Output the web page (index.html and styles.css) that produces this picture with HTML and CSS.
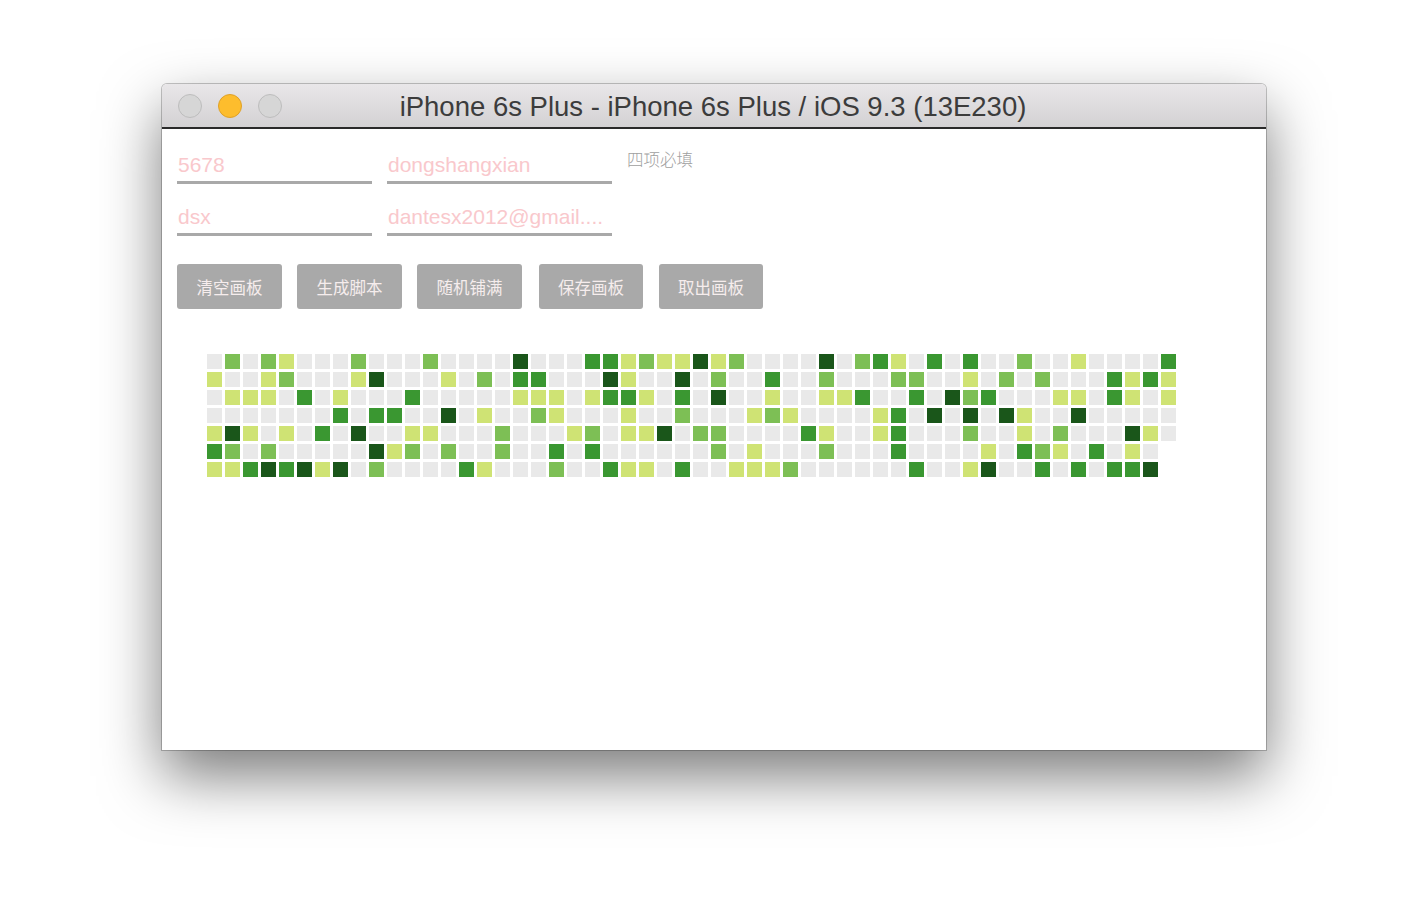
FILE: index.html
```html
<!DOCTYPE html>
<html lang="zh">
<head>
<meta charset="utf-8">
<title>iPhone 6s Plus - iPhone 6s Plus / iOS 9.3 (13E230)</title>
<link rel="stylesheet" href="styles.css">
</head>
<body>
<div class="stage">
  <div class="window">
    <div class="titlebar">
      <div class="lights">
        <span class="light gray"></span>
        <span class="light yellow"></span>
        <span class="light gray"></span>
      </div>
      <div class="title">iPhone 6s Plus - iPhone 6s Plus / iOS 9.3 (13E230)</div>
      <div></div>
    </div>
    <div class="content">
      <div class="form">
        <div class="field f1">5678</div>
        <div class="field f2">dongshangxian</div>
        <div class="hint">四项必填</div>
        <div class="field f1">dsx</div>
        <div class="field f2">dantesx2012@gmail....</div>
      </div>
      <div class="btns">
        <button class="btn">清空画板</button>
        <button class="btn">生成脚本</button>
        <button class="btn">随机铺满</button>
        <button class="btn narrow shift">保存画板</button>
        <button class="btn narrow shift1">取出画板</button>
      </div>
      <div class="graph">
        <div class="wk"><i></i><i class="l1"></i><i></i><i></i><i class="l1"></i><i class="l3"></i><i class="l1"></i></div>
        <div class="wk"><i class="l2"></i><i></i><i class="l1"></i><i></i><i class="l4"></i><i class="l2"></i><i class="l1"></i></div>
        <div class="wk"><i></i><i></i><i class="l1"></i><i></i><i class="l1"></i><i></i><i class="l3"></i></div>
        <div class="wk"><i class="l2"></i><i class="l1"></i><i class="l1"></i><i></i><i></i><i class="l2"></i><i class="l4"></i></div>
        <div class="wk"><i class="l1"></i><i class="l2"></i><i></i><i></i><i class="l1"></i><i></i><i class="l3"></i></div>
        <div class="wk"><i></i><i></i><i class="l3"></i><i></i><i></i><i></i><i class="l4"></i></div>
        <div class="wk"><i></i><i></i><i></i><i></i><i class="l3"></i><i></i><i class="l1"></i></div>
        <div class="wk"><i></i><i></i><i class="l1"></i><i class="l3"></i><i></i><i></i><i class="l4"></i></div>
        <div class="wk"><i class="l2"></i><i class="l1"></i><i></i><i></i><i class="l4"></i><i></i><i></i></div>
        <div class="wk"><i></i><i class="l4"></i><i></i><i class="l3"></i><i></i><i class="l4"></i><i class="l2"></i></div>
        <div class="wk"><i></i><i></i><i></i><i class="l3"></i><i></i><i class="l1"></i><i></i></div>
        <div class="wk"><i></i><i></i><i class="l3"></i><i></i><i class="l1"></i><i class="l2"></i><i></i></div>
        <div class="wk"><i class="l2"></i><i></i><i></i><i></i><i class="l1"></i><i></i><i></i></div>
        <div class="wk"><i></i><i class="l1"></i><i></i><i class="l4"></i><i></i><i class="l2"></i><i></i></div>
        <div class="wk"><i></i><i></i><i></i><i></i><i></i><i></i><i class="l3"></i></div>
        <div class="wk"><i></i><i class="l2"></i><i></i><i class="l1"></i><i></i><i></i><i class="l1"></i></div>
        <div class="wk"><i></i><i></i><i></i><i></i><i class="l2"></i><i class="l2"></i><i></i></div>
        <div class="wk"><i class="l4"></i><i class="l3"></i><i class="l1"></i><i></i><i></i><i></i><i></i></div>
        <div class="wk"><i></i><i class="l3"></i><i class="l1"></i><i class="l2"></i><i></i><i></i><i></i></div>
        <div class="wk"><i></i><i></i><i class="l1"></i><i class="l1"></i><i></i><i class="l3"></i><i class="l2"></i></div>
        <div class="wk"><i></i><i></i><i></i><i></i><i class="l1"></i><i></i><i></i></div>
        <div class="wk"><i class="l3"></i><i></i><i class="l1"></i><i></i><i class="l2"></i><i class="l3"></i><i></i></div>
        <div class="wk"><i class="l3"></i><i class="l4"></i><i class="l3"></i><i></i><i></i><i></i><i class="l3"></i></div>
        <div class="wk"><i class="l1"></i><i class="l1"></i><i class="l3"></i><i class="l1"></i><i class="l1"></i><i></i><i class="l1"></i></div>
        <div class="wk"><i class="l2"></i><i></i><i class="l1"></i><i></i><i class="l1"></i><i></i><i class="l1"></i></div>
        <div class="wk"><i class="l1"></i><i></i><i></i><i></i><i class="l4"></i><i></i><i></i></div>
        <div class="wk"><i class="l1"></i><i class="l4"></i><i class="l3"></i><i class="l2"></i><i></i><i></i><i class="l3"></i></div>
        <div class="wk"><i class="l4"></i><i></i><i></i><i></i><i class="l2"></i><i></i><i></i></div>
        <div class="wk"><i class="l1"></i><i class="l2"></i><i class="l4"></i><i></i><i class="l2"></i><i class="l2"></i><i></i></div>
        <div class="wk"><i class="l2"></i><i></i><i></i><i></i><i></i><i></i><i class="l1"></i></div>
        <div class="wk"><i></i><i></i><i></i><i class="l1"></i><i></i><i class="l1"></i><i class="l1"></i></div>
        <div class="wk"><i></i><i class="l3"></i><i class="l1"></i><i class="l2"></i><i></i><i></i><i class="l1"></i></div>
        <div class="wk"><i></i><i></i><i></i><i class="l1"></i><i></i><i></i><i class="l2"></i></div>
        <div class="wk"><i></i><i></i><i></i><i></i><i class="l3"></i><i></i><i></i></div>
        <div class="wk"><i class="l4"></i><i class="l2"></i><i class="l1"></i><i></i><i class="l1"></i><i class="l2"></i><i></i></div>
        <div class="wk"><i></i><i></i><i class="l1"></i><i></i><i></i><i></i><i></i></div>
        <div class="wk"><i class="l2"></i><i></i><i class="l3"></i><i></i><i></i><i></i><i></i></div>
        <div class="wk"><i class="l3"></i><i></i><i></i><i class="l1"></i><i class="l1"></i><i></i><i></i></div>
        <div class="wk"><i class="l1"></i><i class="l2"></i><i></i><i class="l3"></i><i class="l3"></i><i class="l3"></i><i></i></div>
        <div class="wk"><i></i><i class="l2"></i><i class="l3"></i><i></i><i></i><i></i><i class="l3"></i></div>
        <div class="wk"><i class="l3"></i><i></i><i></i><i class="l4"></i><i></i><i></i><i></i></div>
        <div class="wk"><i></i><i></i><i class="l4"></i><i></i><i></i><i></i><i></i></div>
        <div class="wk"><i class="l3"></i><i class="l1"></i><i class="l2"></i><i class="l4"></i><i class="l2"></i><i></i><i class="l1"></i></div>
        <div class="wk"><i></i><i></i><i class="l3"></i><i></i><i></i><i class="l1"></i><i class="l4"></i></div>
        <div class="wk"><i></i><i class="l2"></i><i></i><i class="l4"></i><i></i><i></i><i></i></div>
        <div class="wk"><i class="l2"></i><i></i><i></i><i class="l1"></i><i class="l1"></i><i class="l3"></i><i></i></div>
        <div class="wk"><i></i><i class="l2"></i><i></i><i></i><i></i><i class="l2"></i><i class="l3"></i></div>
        <div class="wk"><i></i><i></i><i class="l1"></i><i></i><i class="l2"></i><i class="l1"></i><i></i></div>
        <div class="wk"><i class="l1"></i><i></i><i class="l1"></i><i class="l4"></i><i></i><i></i><i class="l3"></i></div>
        <div class="wk"><i></i><i></i><i></i><i></i><i></i><i class="l3"></i><i></i></div>
        <div class="wk"><i></i><i class="l3"></i><i class="l3"></i><i></i><i></i><i></i><i class="l3"></i></div>
        <div class="wk"><i></i><i class="l1"></i><i class="l1"></i><i></i><i class="l4"></i><i class="l1"></i><i class="l3"></i></div>
        <div class="wk"><i></i><i class="l3"></i><i></i><i></i><i class="l1"></i><i></i><i class="l4"></i></div>
        <div class="wk"><i class="l3"></i><i class="l1"></i><i class="l1"></i><i></i><i></i></div>
      </div>
    </div>
  </div>
</div>
</body>
</html>
```
FILE: styles.css
```css
html, body {
  margin: 0;
  padding: 0;
  background: #ffffff;
}

body {
  font-family: "Liberation Sans", "Noto Sans CJK SC", sans-serif;
}

.stage {
  padding: 84px 0 0 162px;
  height: 912px;
  box-sizing: border-box;
}

.window {
  width: 1104px;
  border-radius: 5px 5px 0 0;
  box-shadow: 0 26px 60px rgba(0, 0, 0, 0.52), 0 0 0 1px rgba(0, 0, 0, 0.22);
}

.titlebar {
  height: 43px;
  border-bottom: 2px solid #2a2a2a;
  border-radius: 5px 5px 0 0;
  background: linear-gradient(#e9e7e9, #d3d1d3);
  display: grid;
  grid-template-columns: 1fr auto 1fr;
  align-items: center;
}

.lights {
  display: flex;
  gap: 16px;
  padding-left: 16px;
}

.light {
  width: 24px;
  height: 24px;
  border-radius: 50%;
  box-sizing: border-box;
}

.light.gray {
  background: #d6d6d6;
  border: 1px solid #bdbdbd;
}

.light.yellow {
  background: #fdbd2d;
  border: 1px solid #dfa128;
}

.title {
  font-size: 27.5px;
  color: #3c3c3c;
  white-space: nowrap;
  padding-top: 2px;
  margin-left: -2px;
}

.content {
  height: 621px;
  background: #ffffff;
  padding: 19px 15px 0;
  box-sizing: border-box;
}

.form {
  display: grid;
  grid-template-columns: 195px 225px auto;
  column-gap: 15px;
  row-gap: 16px;
  align-items: start;
}

.field {
  height: 33px;
  line-height: 34px;
  border-bottom: 3px solid #a9a9a9;
  font-size: 21px;
  color: #f9c8cc;
  white-space: nowrap;
  overflow: hidden;
  padding-left: 1px;
}

.hint {
  font-size: 16.5px;
  line-height: 1;
  color: #a0a0a0;
  margin-top: 3px;
  font-family: "Noto Sans CJK SC", sans-serif;
  font-weight: 300;
}

.btns {
  display: flex;
  gap: 15px;
  margin-top: 28px;
}

.btn {
  width: 105px;
  height: 45px;
  border: 0;
  border-radius: 3px;
  background: #a9a9a9;
  color: #f6eded;
  font-family: "Noto Sans CJK SC", sans-serif;
  font-size: 16.5px;
  padding: 0;
  display: flex;
  align-items: center;
  justify-content: center;
}

.btn.narrow {
  width: 104px;
}

.btn.shift {
  margin-left: 2px;
}

.btn.shift1 {
  margin-left: 1px;
}

.graph {
  display: flex;
  gap: 3px;
  margin: 45px 0 0 30px;
}

.wk {
  display: flex;
  flex-direction: column;
  gap: 3px;
}

.wk i {
  display: block;
  width: 15px;
  height: 15px;
  background: #e9e9e9;
}

.wk i.l1 { background: #cfe374; }
.wk i.l2 { background: #7dbf55; }
.wk i.l3 { background: #3a9731; }
.wk i.l4 { background: #1a561a; }
```
